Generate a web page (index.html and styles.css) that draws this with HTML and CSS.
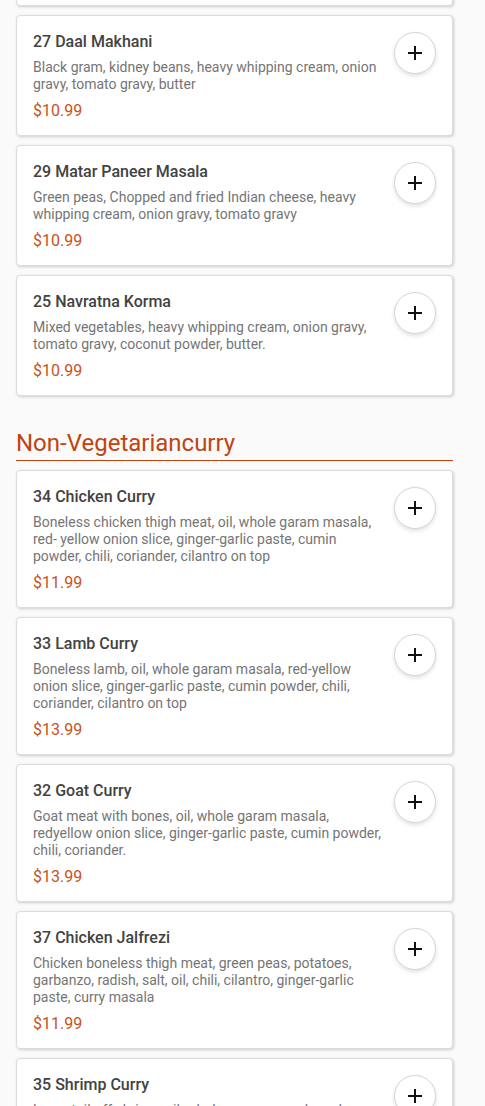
FILE: index.html
```html
<!DOCTYPE html>
<html lang="en">
<head>
<meta charset="utf-8">
<title>Menu</title>
<link rel="stylesheet" href="styles.css">
</head>
<body>
<main class="menu">
  <section class="section section-prev">
    <article class="card card-cut"></article>
    <article class="card">
      <div class="info">
        <h3 class="name">27 Daal Makhani</h3>
        <p class="desc">Black gram, kidney beans, heavy whipping cream, onion gravy, tomato gravy, butter</p>
        <p class="price">$10.99</p>
      </div>
      <button class="add" aria-label="Add"><svg viewBox="0 0 16 16" width="16" height="16"><path d="M8 1v14M1 8h14" stroke="#111" stroke-width="2" fill="none"/></svg></button>
    </article>
    <article class="card">
      <div class="info">
        <h3 class="name">29 Matar Paneer Masala</h3>
        <p class="desc">Green peas, Chopped and fried Indian cheese, heavy whipping cream, onion gravy, tomato gravy</p>
        <p class="price">$10.99</p>
      </div>
      <button class="add" aria-label="Add"><svg viewBox="0 0 16 16" width="16" height="16"><path d="M8 1v14M1 8h14" stroke="#111" stroke-width="2" fill="none"/></svg></button>
    </article>
    <article class="card">
      <div class="info">
        <h3 class="name">25 Navratna Korma</h3>
        <p class="desc">Mixed vegetables, heavy whipping cream, onion gravy, tomato gravy, coconut powder, butter.</p>
        <p class="price">$10.99</p>
      </div>
      <button class="add" aria-label="Add"><svg viewBox="0 0 16 16" width="16" height="16"><path d="M8 1v14M1 8h14" stroke="#111" stroke-width="2" fill="none"/></svg></button>
    </article>
  </section>

  <section class="section">
    <h2 class="section-title">Non-Vegetariancurry</h2>
    <article class="card">
      <div class="info">
        <h3 class="name">34 Chicken Curry</h3>
        <p class="desc">Boneless chicken thigh meat, oil, whole garam masala, red- yellow onion slice, ginger-garlic paste, cumin powder, chili, coriander, cilantro on top</p>
        <p class="price">$11.99</p>
      </div>
      <button class="add" aria-label="Add"><svg viewBox="0 0 16 16" width="16" height="16"><path d="M8 1v14M1 8h14" stroke="#111" stroke-width="2" fill="none"/></svg></button>
    </article>
    <article class="card">
      <div class="info">
        <h3 class="name">33 Lamb Curry</h3>
        <p class="desc">Boneless lamb, oil, whole garam masala, red-yellow onion slice, ginger-garlic paste, cumin powder, chili, coriander, cilantro on top</p>
        <p class="price">$13.99</p>
      </div>
      <button class="add" aria-label="Add"><svg viewBox="0 0 16 16" width="16" height="16"><path d="M8 1v14M1 8h14" stroke="#111" stroke-width="2" fill="none"/></svg></button>
    </article>
    <article class="card">
      <div class="info">
        <h3 class="name">32 Goat Curry</h3>
        <p class="desc">Goat meat with bones, oil, whole garam masala, redyellow onion slice, ginger-garlic paste, cumin powder, chili, coriander.</p>
        <p class="price">$13.99</p>
      </div>
      <button class="add" aria-label="Add"><svg viewBox="0 0 16 16" width="16" height="16"><path d="M8 1v14M1 8h14" stroke="#111" stroke-width="2" fill="none"/></svg></button>
    </article>
    <article class="card">
      <div class="info">
        <h3 class="name">37 Chicken Jalfrezi</h3>
        <p class="desc">Chicken boneless thigh meat, green peas, potatoes, garbanzo, radish, salt, oil, chili, cilantro, ginger-garlic paste, curry masala</p>
        <p class="price">$11.99</p>
      </div>
      <button class="add" aria-label="Add"><svg viewBox="0 0 16 16" width="16" height="16"><path d="M8 1v14M1 8h14" stroke="#111" stroke-width="2" fill="none"/></svg></button>
    </article>
    <article class="card">
      <div class="info">
        <h3 class="name">35 Shrimp Curry</h3>
        <p class="desc">Large tail-off shrimp, oil, whole garam masala, red-yellow onion slice, ginger-garlic paste, cumin powder, chili, coriander</p>
        <p class="price">$14.99</p>
      </div>
      <button class="add" aria-label="Add"><svg viewBox="0 0 16 16" width="16" height="16"><path d="M8 1v14M1 8h14" stroke="#111" stroke-width="2" fill="none"/></svg></button>
    </article>
  </section>
</main>
</body>
</html>
```
FILE: styles.css
```css
html, body {
  margin: 0;
  padding: 0;
  background: #fafafa;
  font-family: Roboto, "Liberation Sans", Arial, sans-serif;
  overflow: hidden;
  height: 1106px;
}

.menu {
  width: 437px;
  padding: 0 16px;
  margin-top: -125px;
}

.section {
  display: flex;
  flex-direction: column;
  gap: 9px;
}

.section + .section {
  margin-top: 33px;
}

.section-title {
  margin: 0;
  font-size: 24px;
  line-height: 28px;
  font-weight: 400;
  color: #c1440e;
  padding-bottom: 3px;
  border-bottom: 1px solid #c1440e;
}

.card {
  display: flex;
  align-items: flex-start;
  gap: 10px;
  background: #fff;
  border: 1px solid #dcdcdc;
  border-radius: 4px;
  box-shadow: 1px 1px 3px rgba(0, 0, 0, 0.18);
  padding: 16px 16px 14px;
}

.card-cut {
  height: 99px;
}

.info {
  flex: 1;
  min-width: 0;
}

.name {
  margin: 0;
  font-size: 16px;
  line-height: 20px;
  font-weight: 500;
  color: #424242;
}

.desc {
  margin: 7px 0 0;
  font-size: 14px;
  line-height: 17px;
  color: #757575;
}

.price {
  margin: 8px 0 0;
  font-size: 16px;
  line-height: 20px;
  color: #c8521a;
}

.add {
  flex: none;
  width: 42px;
  height: 42px;
  border-radius: 50%;
  border: 1px solid #d6d6d6;
  background: #fff;
  box-shadow: 0 2px 4px rgba(0, 0, 0, 0.12);
  display: flex;
  align-items: center;
  justify-content: center;
  padding: 0;
}
```
